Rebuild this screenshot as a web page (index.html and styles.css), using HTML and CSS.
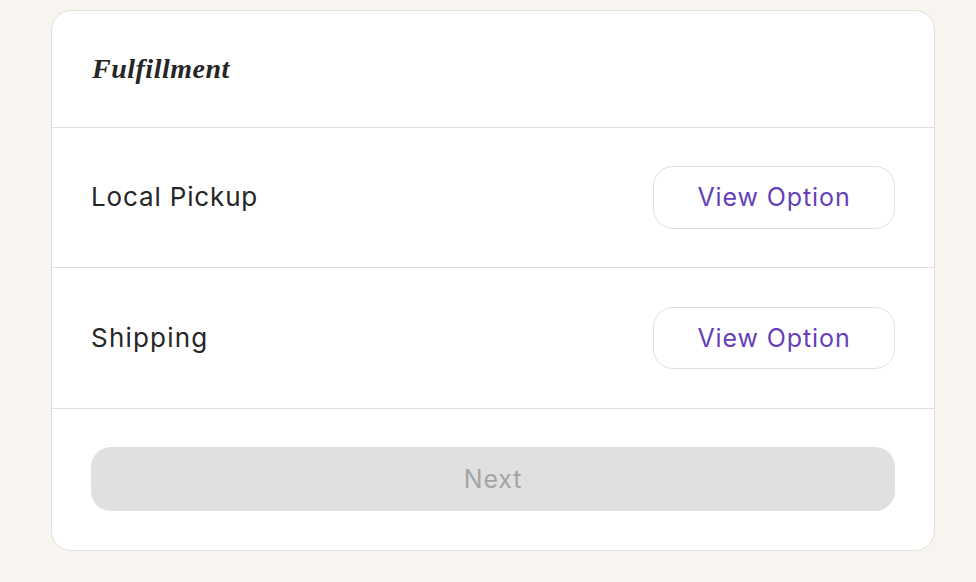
FILE: index.html
```html
<!DOCTYPE html>
<html lang="en">
<head>
<meta charset="utf-8">
<title>Fulfillment</title>
<link rel="stylesheet" href="styles.css">
</head>
<body>
<main class="card">
  <header class="head"><h1 class="title">Fulfillment</h1></header>
  <section class="row">
    <span class="label">Local Pickup</span>
    <button class="option" type="button">View Option</button>
  </section>
  <section class="row">
    <span class="label">Shipping</span>
    <button class="option" type="button">View Option</button>
  </section>
  <footer class="foot"><button class="next" type="button" disabled>Next</button></footer>
</main>
</body>
</html>
```

FILE: styles.css
```css
* { box-sizing: border-box; }
html, body { margin: 0; height: 100%; }
body {
  background: #f8f5f0;
  padding: 10px 41px 0 51px;
  font-family: "Inter", "Noto Sans", sans-serif;
  overflow: hidden;
}
.card {
  height: 541px;
  background: #fff;
  border: 1px solid #e0e0dc;
  border-radius: 20px;
  display: flex;
  flex-direction: column;
}
.head {
  height: 117px;
  padding: 0 39px 0 40px;
  border-bottom: 1px solid #e0e0e0;
  display: flex;
  align-items: center;
}
.title {
  margin: 0;
  font-family: "Liberation Serif", serif;
  font-style: italic;
  font-weight: 700;
  font-size: 28px;
  letter-spacing: 0.5px;
  color: #262626;
}
.row {
  height: 140px;
  padding: 0 39px;
  border-bottom: 1px solid #e0e0e0;
  display: flex;
  align-items: center;
  justify-content: space-between;
}
.row + .row { height: 141px; }
.label {
  padding-bottom: 2px;
  font-size: 26px;
  letter-spacing: 0.85px;
  color: #262626;
}
.row + .row .label {
  padding-bottom: 1px;
  letter-spacing: 1.2px;
}
.option {
  width: 242px;
  height: 62.6px;
  padding: 0 0 2px;
  background: #fff;
  border: 1px solid #e0e0e0;
  border-radius: 20px;
  font: inherit;
  font-size: 25px;
  letter-spacing: 0.9px;
  color: #653fbb;
}
.row + .row .option { padding-bottom: 0; }
.foot {
  flex: 1;
  padding: 38px 39px 0;
}
.next {
  display: block;
  width: 100%;
  height: 64px;
  background: #e0e0e0;
  border: 0;
  border-radius: 20px;
  font: inherit;
  font-size: 25px;
  letter-spacing: 0.8px;
  color: #a4a4a4;
}
```
